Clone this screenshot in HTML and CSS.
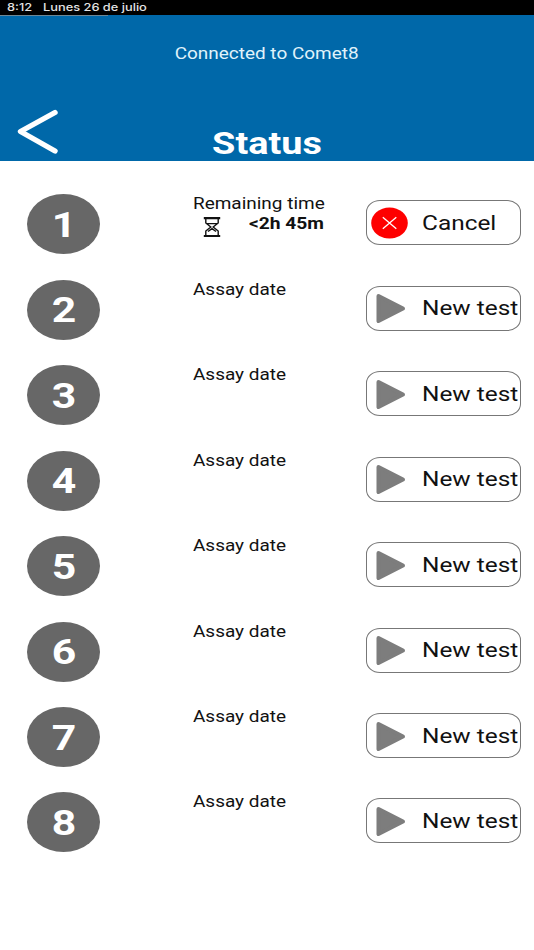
FILE: index.html
```html
<!DOCTYPE html>
<html lang="es">
<head>
<meta charset="utf-8">
<title>Status</title>
<link rel="stylesheet" href="styles.css">
</head>
<body>
<div class="statusbar"><span class="wide clock">8:12</span><span class="wide">Lunes 26 de julio</span></div>
<header class="header">
  <div class="progress"></div>
  <p class="connection"><span class="wide">Connected to Comet8</span></p>
  <div class="titlebar">
    <svg class="back" viewBox="0 0 44 48"><path d="M38 4.500 3.500 23.500 38 43" fill="none" stroke="#fff" stroke-width="5.400" stroke-linecap="round" stroke-linejoin="round"/></svg>
    <h1 class="title"><span class="wide">Status</span></h1>
  </div>
</header>
<main class="slots">
  <section class="slot">
    <div class="number"><span class="wide">1</span></div>
    <div class="info">
      <span class="wide label">Remaining time</span>
      <div class="time">
        <svg class="hourglass" viewBox="0 0 18 22"><path d="M.8 2.200h16.400M.8 20h16.400" stroke="#111" stroke-width="2.200" fill="none"/><path d="M2.800 2v5L7.800 11l-5 4v5M15.200 2v5l-5 4 5 4v5M4 7.600h10M5 15.500l4-2.800 4 2.800" stroke="#111" stroke-width="1.400" fill="none"/></svg>
        <span class="wide left">&lt;2h 45m</span>
      </div>
    </div>
    <div class="button">
      <svg class="icon" viewBox="0 0 40 34"><ellipse cx="19.500" cy="17" rx="18.300" ry="15.500" fill="#fe0000"/><path d="m12.800 11.300 13.500 11.400m0-11.400L12.800 22.700" stroke="#fff" stroke-width="1.300"/></svg>
      <span class="wide">Cancel</span>
    </div>
  </section>
  <section class="slot"><div class="number"><span class="wide">2</span></div><div class="info"><span class="wide label">Assay date</span></div><div class="button"><svg class="icon" viewBox="0 0 40 34"><path class="play" d="M8.500 5 33 17.500 8.500 30z"/></svg><span class="wide">New test</span></div></section>
  <section class="slot"><div class="number"><span class="wide">3</span></div><div class="info"><span class="wide label">Assay date</span></div><div class="button"><svg class="icon" viewBox="0 0 40 34"><path class="play" d="M8.500 5 33 17.500 8.500 30z"/></svg><span class="wide">New test</span></div></section>
  <section class="slot"><div class="number"><span class="wide">4</span></div><div class="info"><span class="wide label">Assay date</span></div><div class="button"><svg class="icon" viewBox="0 0 40 34"><path class="play" d="M8.500 5 33 17.500 8.500 30z"/></svg><span class="wide">New test</span></div></section>
  <section class="slot"><div class="number"><span class="wide">5</span></div><div class="info"><span class="wide label">Assay date</span></div><div class="button"><svg class="icon" viewBox="0 0 40 34"><path class="play" d="M8.500 5 33 17.500 8.500 30z"/></svg><span class="wide">New test</span></div></section>
  <section class="slot"><div class="number"><span class="wide">6</span></div><div class="info"><span class="wide label">Assay date</span></div><div class="button"><svg class="icon" viewBox="0 0 40 34"><path class="play" d="M8.500 5 33 17.500 8.500 30z"/></svg><span class="wide">New test</span></div></section>
  <section class="slot"><div class="number"><span class="wide">7</span></div><div class="info"><span class="wide label">Assay date</span></div><div class="button"><svg class="icon" viewBox="0 0 40 34"><path class="play" d="M8.500 5 33 17.500 8.500 30z"/></svg><span class="wide">New test</span></div></section>
  <section class="slot"><div class="number"><span class="wide">8</span></div><div class="info"><span class="wide label">Assay date</span></div><div class="button"><svg class="icon" viewBox="0 0 40 34"><path class="play" d="M8.500 5 33 17.500 8.500 30z"/></svg><span class="wide">New test</span></div></section>
</main>
</body>
</html>
```
FILE: styles.css
```css
* { box-sizing: border-box; }
body {
  margin: 0;
  min-height: 950px;
  background: #fff;
  color: #111;
  font-family: Roboto, "Liberation Sans", sans-serif;
}
/* Glyphs are wider than the font's natural proportions */
.wide {
  display: inline-block;
  white-space: nowrap;
  transform: scaleX(1.22);
  transform-origin: left center;
}
.statusbar {
  display: flex;
  height: 15px;
  padding: 1px 0 0 7px;
  background: #000;
  color: #e4e4e4;
  font: 500 10.5px/14px Inter, sans-serif;
}
.clock { width: 36px; }
.header {
  height: 146px;
  background: #0068a9;
  color: #fff;
}
.progress {
  width: 108px;
  height: 1px;
  background: #6d8795;
}
.connection {
  margin: 0;
  padding-top: 28px;
  text-align: center;
  font-size: 16px;
  line-height: 20px;
  color: #e0f3fb;
}
.connection .wide, .title .wide, .number .wide { transform-origin: center; }
.connection .wide { transform: scaleX(1.185); }
.titlebar {
  display: grid;
  grid-template-columns: 80px 1fr 80px;
  padding-top: 43px;
}
.back {
  width: 44px;
  height: 48px;
  margin: 1px 0 0 17px;
}
.title {
  margin: 19px 0 0;
  text-align: center;
  font-size: 31px;
  line-height: 36px;
  font-weight: 700;
}
.slots { padding-top: 20.6px; }
.slot {
  display: grid;
  grid-template-columns: 166px 172.5px 155px;
  height: 85.46px;
  padding-left: 27px;
  align-items: center;
}
.number {
  display: flex;
  align-items: center;
  justify-content: center;
  width: 73px;
  height: 60px;
  padding: 2px 0 0 2px;
  border-radius: 50%;
  background: #676767;
  color: #fff;
  font-size: 35px;
  font-weight: 700;
}
.info { height: 60px; }
.label {
  font-size: 16px;
  line-height: 20px;
  vertical-align: top;
  transform: scaleX(1.185);
}
.time {
  display: flex;
  height: 24px;
}
.hourglass {
  width: 18px;
  height: 22px;
  margin: 2px 28px 0 10px;
}
.left {
  font-size: 16px;
  line-height: 20px;
  font-weight: 700;
  transform: scaleX(1.2);
}
.button {
  display: flex;
  align-items: center;
  width: 155px;
  height: 45px;
  margin-top: -3px;
  border: 1.3px solid #777;
  border-radius: 14px / 12px;
  font-size: 20px;
  line-height: 24px;
}
.icon {
  flex: none;
  width: 40px;
  height: 34px;
  margin: 0 11.5px 0 3.5px;
}
.play {
  fill: #7d7d7d;
  stroke: #7d7d7d;
  stroke-width: 4px;
  stroke-linejoin: round;
}
```
